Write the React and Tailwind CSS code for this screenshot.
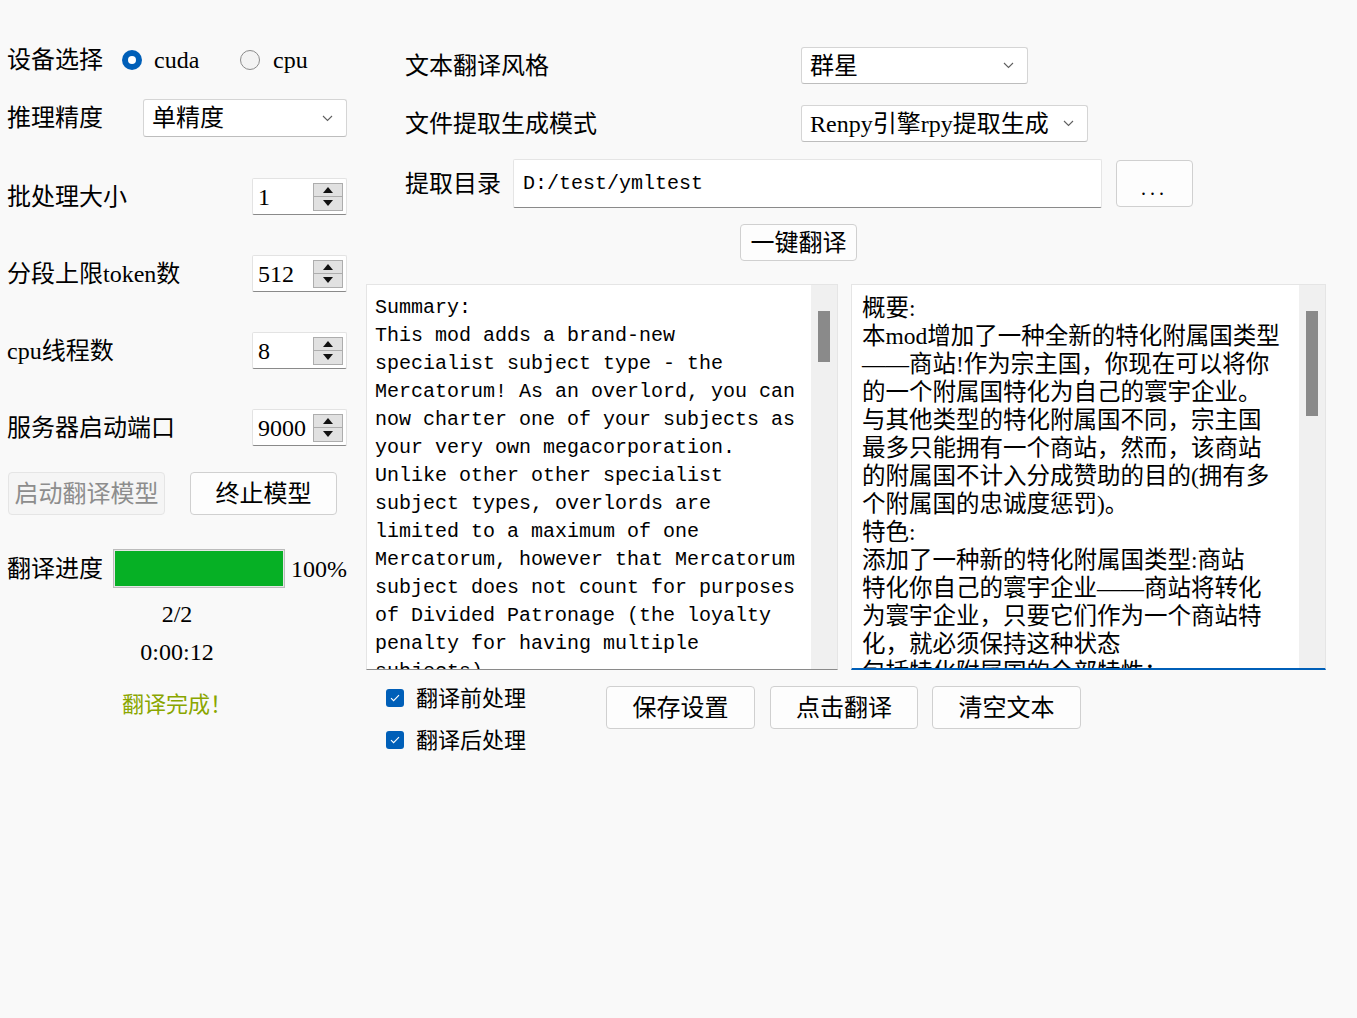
import React from "react";

const leftText = [
  "Summary:",
  "This mod adds a brand-new",
  "specialist subject type - the",
  "Mercatorum! As an overlord, you can",
  "now charter one of your subjects as",
  "your very own megacorporation.",
  "Unlike other other specialist",
  "subject types, overlords are",
  "limited to a maximum of one",
  "Mercatorum, however that Mercatorum",
  "subject does not count for purposes",
  "of Divided Patronage (the loyalty",
  "penalty for having multiple",
  "subjects).",
];

const rightText = [
  "概要:",
  "本mod增加了一种全新的特化附属国类型",
  "——商站!作为宗主国，你现在可以将你",
  "的一个附属国特化为自己的寰宇企业。",
  "与其他类型的特化附属国不同，宗主国",
  "最多只能拥有一个商站，然而，该商站",
  "的附属国不计入分成赞助的目的(拥有多",
  "个附属国的忠诚度惩罚)。",
  "特色:",
  "添加了一种新的特化附属国类型:商站",
  "特化你自己的寰宇企业——商站将转化",
  "为寰宇企业，只要它们作为一个商站特",
  "化，就必须保持这种状态",
  "包括特化附属国的全部特性：",
];

function Chevron() {
  return (
    <svg width="11" height="7" viewBox="0 0 11 7" className="shrink-0">
      <path d="M1 1l4.5 4.5L10 1" fill="none" stroke="#5f5f5f" strokeWidth="1.1" />
    </svg>
  );
}

function Combo({ value, width }) {
  return (
    <div
      className={`flex items-center h-full bg-white border border-[#d5d5d5] border-b-[#bdbdbd] rounded-[3px] pl-[8px] pr-[13px] ${width}`}
    >
      <span className="flex-1 truncate">{value}</span>
      <Chevron />
    </div>
  );
}

function Spin({ value }) {
  return (
    <div className="ml-auto w-[95px] h-full flex items-center bg-white border border-[#e3e3e3] border-b-[#8a8a8a] rounded-[2px] pl-[5px] pr-[3px]">
      <span className="flex-1">{value}</span>
      <div className="flex flex-col w-[30px] h-[28px]">
        <div className="flex-1 flex items-center justify-center bg-[#e1e1e1] border border-[#adadad]">
          <svg width="10" height="6" viewBox="0 0 10 6">
            <path d="M0 6L5 0l5 6z" fill="#111" />
          </svg>
        </div>
        <div className="flex-1 flex items-center justify-center bg-[#e1e1e1] border border-t-0 border-[#adadad]">
          <svg width="10" height="6" viewBox="0 0 10 6">
            <path d="M0 0h10L5 6z" fill="#111" />
          </svg>
        </div>
      </div>
    </div>
  );
}

function Button({ children, className = "", disabled = false }) {
  return (
    <div
      className={`flex items-center justify-center rounded-[4px] border ${
        disabled
          ? "bg-[#f5f5f5] border-[#e5e5e5] text-[#8d8d8d]"
          : "bg-[#fdfdfd] border-[#d0d0d0] text-black"
      } ${className}`}
    >
      {children}
    </div>
  );
}

function Radio({ checked }) {
  return checked ? (
    <div className="w-[20px] h-[20px] rounded-full bg-[#005fb8] flex items-center justify-center shrink-0">
      <div className="w-[8px] h-[8px] rounded-full bg-white" />
    </div>
  ) : (
    <div className="w-[20px] h-[20px] rounded-full bg-[#f3f3f3] border border-[#8a8a8a] shrink-0" />
  );
}

function Check({ label }) {
  return (
    <div className="flex items-center h-[24px]">
      <div className="w-[18px] h-[18px] rounded-[3px] bg-[#005fb8] flex items-center justify-center">
        <svg width="10" height="8" viewBox="0 0 10 8">
          <path d="M1 4.2l2.6 2.5L9 1.2" fill="none" stroke="white" strokeWidth="1.1" />
        </svg>
      </div>
      <span className="ml-[12px] text-[22px]">{label}</span>
    </div>
  );
}

function TextPane({ lines, width, mono, thumbH, focused }) {
  return (
    <div
      className={`flex h-full bg-white border border-[#e5e5e5] ${
        focused ? "border-b-2 border-b-[#005fb8]" : "border-b-[#8a8a8a]"
      } ${width}`}
    >
      <div
        className={`flex-1 overflow-hidden pt-[9px] ${
          mono
            ? "pl-[8px] text-[20px] font-['Liberation_Mono','Noto_Sans_CJK_SC',monospace]"
            : "pl-[10px] text-[23.5px]"
        } leading-[28px] whitespace-pre`}
      >
        {lines.map((l, i) => (
          <div key={i} className="h-[28px]">
            {l}
          </div>
        ))}
      </div>
      <div className="w-[26px] bg-[#f0f0f0] pt-[26px] flex justify-center">
        <div className={`w-[12px] bg-[#8a8a8a] ${thumbH}`} />
      </div>
    </div>
  );
}

export default function App() {
  return (
    <div className="w-[1357px] h-[1018px] bg-[#f9f9f9] text-black text-[24px] font-['Liberation_Serif','Noto_Sans_CJK_SC',serif] flex overflow-hidden">
      {/* left settings column */}
      <div className="w-[340px] ml-[7px] flex flex-col pt-[40px] shrink-0">
        <div className="h-[40px] flex items-center">
          <span className="w-[115px]">设备选择</span>
          <Radio checked />
          <span className="ml-[12px] w-[86px]">cuda</span>
          <Radio />
          <span className="ml-[13px]">cpu</span>
        </div>

        <div className="mt-[19px] h-[38px] flex items-center">
          <span>推理精度</span>
          <div className="ml-auto h-full">
            <Combo value="单精度" width="w-[204px]" />
          </div>
        </div>

        <div className="mt-[41px] h-[37px] flex items-center">
          <span>批处理大小</span>
          <Spin value="1" />
        </div>
        <div className="mt-[40px] h-[37px] flex items-center">
          <span>分段上限token数</span>
          <Spin value="512" />
        </div>
        <div className="mt-[40px] h-[37px] flex items-center">
          <span>cpu线程数</span>
          <Spin value="8" />
        </div>
        <div className="mt-[40px] h-[37px] flex items-center">
          <span>服务器启动端口</span>
          <Spin value="9000" />
        </div>

        <div className="mt-[26px] h-[43px] flex">
          <Button disabled className="ml-[1px] w-[157px]">
            启动翻译模型
          </Button>
          <Button className="ml-[25px] w-[147px]">终止模型</Button>
        </div>

        <div className="mt-[34px] h-[39px] flex items-center">
          <span className="w-[106px]">翻译进度</span>
          <div className="w-[173px] h-full border border-[#bcbcbc] bg-[#e6e6e6] p-px">
            <div className="h-full w-full bg-[#06b025]" />
          </div>
          <span className="ml-[6px]">100%</span>
        </div>

        <div className="mt-[12px] h-[28px] flex items-center justify-center">2/2</div>
        <div className="mt-[10px] h-[28px] flex items-center justify-center">0:00:12</div>
        <div className="mt-[24px] h-[28px] flex items-center justify-center text-[22px] text-[#8aa600]">
          翻译完成！
        </div>
      </div>

      {/* right work area */}
      <div className="ml-[19px] w-[960px] flex flex-col pt-[47px]">
        <div className="h-[37px] flex items-center">
          <span className="ml-[39px] w-[396px]">文本翻译风格</span>
          <div className="h-full">
            <Combo value="群星" width="w-[227px]" />
          </div>
        </div>
        <div className="mt-[21px] h-[37px] flex items-center">
          <span className="ml-[39px] w-[396px]">文件提取生成模式</span>
          <div className="h-full">
            <Combo value="Renpy引擎rpy提取生成" width="w-[287px]" />
          </div>
        </div>
        <div className="mt-[17px] h-[49px] flex items-center">
          <span className="ml-[39px] w-[108px]">提取目录</span>
          <div className="w-[589px] h-full flex items-center bg-white border border-[#e5e5e5] border-b-[#8a8a8a] rounded-[2px] pl-[9px] text-[20px] font-['Liberation_Mono','Noto_Sans_CJK_SC',monospace]">
            D:/test/ymltest
          </div>
          <Button className="ml-[14px] w-[77px] h-[47px] pt-[8px] text-[20px] tracking-[4px]">...</Button>
        </div>

        <div className="mt-[16px] h-[37px] flex">
          <Button className="ml-[374px] w-[117px]">一键翻译</Button>
        </div>

        <div className="mt-[23px] h-[386px] flex">
          <TextPane lines={leftText} width="w-[472px]" mono thumbH="h-[51px]" />
          <div className="w-[13px]" />
          <TextPane lines={rightText} width="w-[475px]" thumbH="h-[105px]" focused />
        </div>

        <div className="mt-[16px] flex items-start">
          <div className="ml-[20px] w-[220px] flex flex-col gap-[18px]">
            <Check label="翻译前处理" />
            <Check label="翻译后处理" />
          </div>
          <Button className="w-[149px] h-[43px]">保存设置</Button>
          <Button className="ml-[15px] w-[148px] h-[43px]">点击翻译</Button>
          <Button className="ml-[14px] w-[149px] h-[43px]">清空文本</Button>
        </div>
      </div>
    </div>
  );
}
